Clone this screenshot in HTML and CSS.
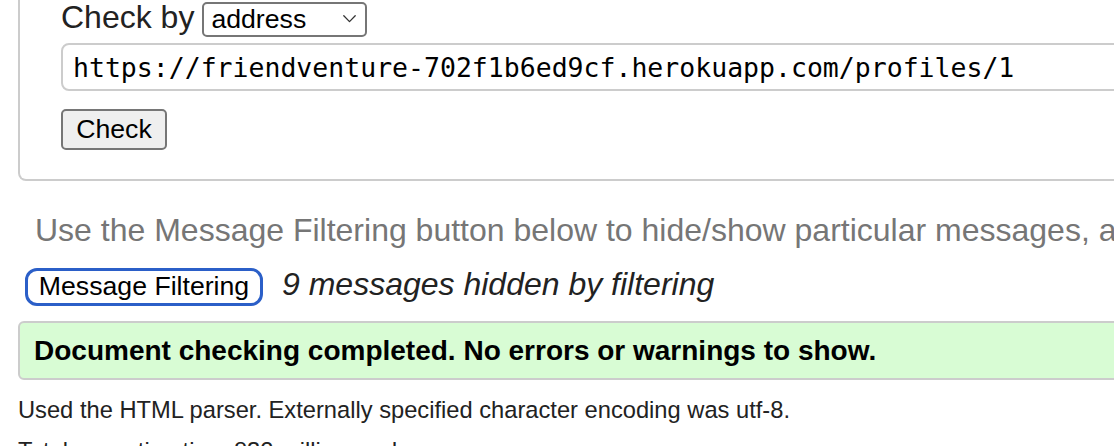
FILE: index.html
```html
<!DOCTYPE html>
<html lang="en">
<head>
<meta charset="utf-8">
<title>Nu Html Checker</title>
<link rel="stylesheet" href="styles.css">
</head>
<body>
<div class="page">
  <div class="form-box">
    <div class="check-row">
      <label class="check-label" for="docselect">Check by</label>
      <div class="select-wrap">
        <select id="docselect" class="doc-select"><option>address</option></select>
        <svg class="chev" width="13" height="8" viewBox="0 0 13 8" aria-hidden="true"><path d="M0.8 0.8 L6.5 6.6 L12.2 0.8" fill="none" stroke="#333" stroke-width="1.3" stroke-linecap="round" stroke-linejoin="round"/></svg>
      </div>
    </div>
    <input class="url-input" type="text" value="https://friendventure-702f1b6ed9cf.herokuapp.com/profiles/1">
    <button class="check-btn" type="button">Check</button>
  </div>
  <p class="hint">Use the Message Filtering button below to hide/show particular messages, and to see total counts of errors and warnings.</p>
  <div class="filter-row">
    <button class="filter-btn" type="button">Message Filtering</button>
    <span class="hidden-note">9 messages hidden by filtering</span>
  </div>
  <p class="success">Document checking completed. No errors or warnings to show.</p>
  <p class="info">Used the HTML parser. Externally specified character encoding was utf-8.</p>
  <p class="info info-time">Total execution time 832 milliseconds.</p>
</div>
</body>
</html>
```

FILE: styles.css
```css
html, body {
  margin: 0;
  padding: 0;
  overflow: hidden;
  background: #fff;
}

body {
  font-family: "Liberation Sans", Arial, Helvetica, sans-serif;
  color: #222;
}

.page {
  width: 1200px;
}

.form-box {
  margin-left: 18px;
  border: 2px solid #ccc;
  border-top: 0;
  border-radius: 0 0 8px 8px;
  padding: 0 0 29px 41px;
  display: flex;
  flex-direction: column;
  align-items: flex-start;
}

.check-row {
  display: flex;
  align-items: flex-start;
  gap: 8px;
  height: 39px;
}

.check-label {
  font-size: 32px;
  line-height: 32px;
  padding-top: 1px;
  color: #222;
}

.select-wrap {
  position: relative;
  margin-top: 2px;
}

.doc-select {
  appearance: none;
  -webkit-appearance: none;
  box-sizing: border-box;
  width: 165px;
  height: 35px;
  border: 2px solid #767676;
  border-radius: 5px;
  background: #fff;
  color: #000;
  font-family: "Liberation Sans", Arial, sans-serif;
  font-size: 26.67px;
  padding: 0 0 4px 7px;
  margin: 0;
}

.chev {
  position: absolute;
  left: 141px;
  top: 13px;
  pointer-events: none;
}

.url-input {
  box-sizing: border-box;
  width: 1100px;
  height: 48px;
  margin: 4px 0 0 0;
  border: 2px solid #ccc;
  border-radius: 8px;
  padding: 0 10px;
  font-family: "DejaVu Sans Mono", "Liberation Mono", monospace;
  font-size: 26.5px;
  color: #000;
  background: #fff;
}

.check-btn {
  box-sizing: border-box;
  width: 106px;
  height: 41px;
  margin: 18px 0 0 0;
  padding: 0;
  border: 2px solid #767676;
  border-radius: 5px;
  background: #efefef;
  color: #000;
  font-family: "Liberation Sans", Arial, sans-serif;
  font-size: 26.67px;
}

.hint {
  margin: 29px 0 0 35px;
  font-size: 32px;
  line-height: 40px;
  color: #767676;
  white-space: nowrap;
}

.filter-row {
  display: flex;
  align-items: flex-start;
  gap: 19px;
  margin: 18px 0 0 25px;
}

.filter-btn {
  box-sizing: border-box;
  width: 238px;
  height: 38px;
  padding: 0 0 5px 0;
  border: 3px solid #2b5fc8;
  border-radius: 12px;
  background: #fff;
  color: #000;
  font-family: "Liberation Sans", Arial, sans-serif;
  font-size: 26.67px;
  white-space: nowrap;
}

.hidden-note {
  font-size: 32px;
  line-height: 32px;
  font-style: italic;
  color: #222;
  white-space: nowrap;
}

.success {
  box-sizing: border-box;
  margin: 15px 0 0 18px;
  height: 59px;
  border: 2px solid #ccc;
  border-radius: 6px;
  background: #d8fcd4;
  padding: 0 0 0 14px;
  display: flex;
  align-items: center;
  font-size: 28px;
  font-weight: bold;
  color: #000;
  white-space: nowrap;
}

.info {
  margin: 16px 0 0 18px;
  font-size: 23.7px;
  line-height: 28px;
  color: #222;
  white-space: nowrap;
}

.info-time {
  margin-top: 13px;
}
```
